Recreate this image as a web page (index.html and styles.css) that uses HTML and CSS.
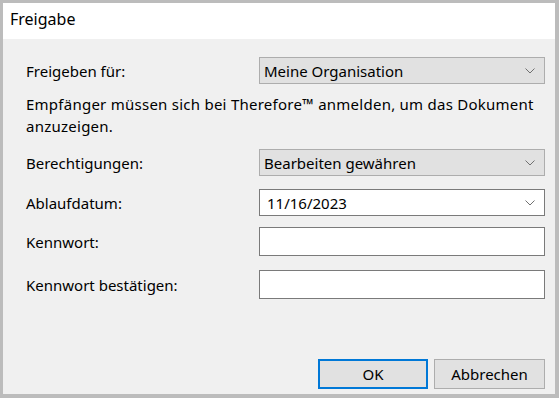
FILE: index.html
```html
<!DOCTYPE html>
<html lang="de">
<head>
  <meta charset="UTF-8" />
  <title>Freigabe</title>
  <link rel="stylesheet" href="styles.css">
</head>
<body>
  <div class="window">
    <div class="titlebar">Freigabe</div>
    <div class="content">
      <div class="row row-first">
        <label class="label">Freigeben für:</label>
        <div class="combo">
          <span>Meine Organisation</span>
          <svg class="chevron" width="10" height="6" viewBox="0 0 10 6"><path d="M0.5 0.5 L5 5 L9.5 0.5" fill="none" stroke="#707070" stroke-width="1"/></svg>
        </div>
      </div>

      <p class="info">Empfänger müssen sich bei Therefore™ anmelden, um das Dokument anzuzeigen.</p>

      <div class="row row-perm">
        <label class="label">Berechtigungen:</label>
        <div class="combo">
          <span>Bearbeiten gewähren</span>
          <svg class="chevron" width="10" height="6" viewBox="0 0 10 6"><path d="M0.5 0.5 L5 5 L9.5 0.5" fill="none" stroke="#707070" stroke-width="1"/></svg>
        </div>
      </div>

      <div class="row row-date">
        <label class="label">Ablaufdatum:</label>
        <div class="field date">
          <span>11/16/2023</span>
          <svg class="chevron" width="10" height="6" viewBox="0 0 10 6"><path d="M0.5 0.5 L5 5 L9.5 0.5" fill="none" stroke="#707070" stroke-width="1"/></svg>
        </div>
      </div>

      <div class="row row-pass">
        <label class="label">Kennwort:</label>
        <div class="field text"></div>
      </div>

      <div class="row row-pass2">
        <label class="label">Kennwort bestätigen:</label>
        <div class="field text"></div>
      </div>

      <div class="buttons">
        <button class="btn btn-default">OK</button>
        <button class="btn">Abbrechen</button>
      </div>
    </div>
  </div>
</body>
</html>
```

FILE: styles.css
```css
* {
  margin: 0;
  padding: 0;
  box-sizing: border-box;
}

body {
  font-family: "Noto Sans", "Open Sans", sans-serif;
  font-size: 15px;
  color: #000;
  background: #bcbcbc;
}

.window {
  width: 559px;
  height: 398px;
  border-style: solid;
  border-color: #bcbcbc;
  border-width: 3px 4px 4px 3px;
  background: #f0f0f0;
  display: flex;
  flex-direction: column;
}

.titlebar {
  height: 36px;
  background: #fff;
  padding-left: 7px;
  line-height: 32px;
  font-size: 16px;
}

.content {
  flex: 1;
  padding: 0 10px 0 23px;
  display: flex;
  flex-direction: column;
}

.row {
  display: grid;
  grid-template-columns: 233px 286px;
  align-items: center;
}

.label {
  line-height: 20px;
}

.row-first { margin-top: 18px; }
.row-perm { margin-top: 12px; }
.row-date { margin-top: 13px; }
.row-pass { margin-top: 11px; }
.row-pass2 { margin-top: 14px; }

.combo,
.field {
  height: 27px;
  display: flex;
  align-items: center;
  justify-content: space-between;
  padding: 0 9px 0 4px;
}

.combo {
  background: #e1e1e1;
  border: 1px solid #adadad;
}

.field {
  background: #fff;
  border: 1px solid #7a7a7a;
  padding-left: 7px;
}

.field.text {
  height: 29px;
}

.chevron {
  display: block;
}

.info {
  margin-top: 9px;
  line-height: 22px;
  letter-spacing: 0.25px;
}

.buttons {
  margin-top: auto;
  margin-bottom: 5px;
  display: flex;
  justify-content: flex-end;
  gap: 6px;
}

.btn {
  width: 111px;
  height: 30px;
  font-family: inherit;
  font-size: 15px;
  background: #e1e1e1;
  border: 1px solid #adadad;
  color: #000;
}

.btn-default {
  width: 110px;
  border: 2px solid #0078d7;
}
```
